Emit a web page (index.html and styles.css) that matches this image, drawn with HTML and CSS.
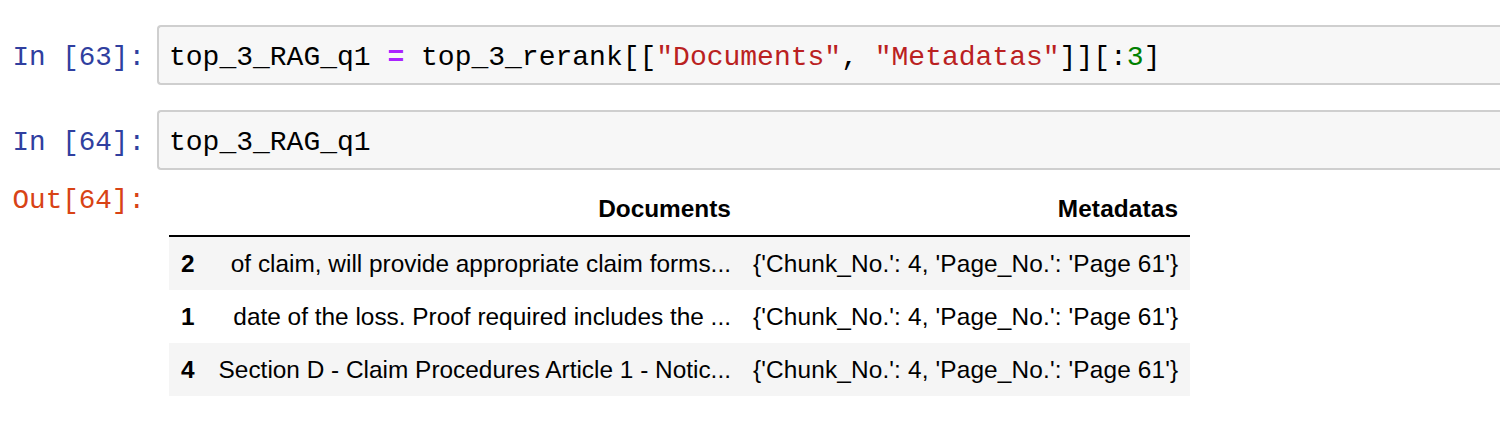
FILE: index.html
```html
<!DOCTYPE html>
<html>
<head>
<meta charset="utf-8">
<link rel="stylesheet" href="styles.css">
</head>
<body>
<div class="notebook">
  <div class="cell">
    <div class="prompt in">In&nbsp;[63]:</div>
    <div class="input-area"><span>top_3_RAG_q1 </span><span class="op">=</span><span> top_3_rerank[[</span><span class="str">"Documents"</span><span>, </span><span class="str">"Metadatas"</span><span>]][:</span><span class="num">3</span><span>]</span></div>
  </div>
  <div class="cell">
    <div class="prompt in">In&nbsp;[64]:</div>
    <div class="input-area"><span>top_3_RAG_q1</span></div>
  </div>
  <div class="output">
    <div class="prompt out">Out[64]:</div>
    <div class="output-area">
      <table class="dataframe">
        <thead>
          <tr><th></th><th>Documents</th><th class="meta">Metadatas</th></tr>
        </thead>
        <tbody>
          <tr><th>2</th><td>of claim, will provide appropriate claim forms...</td><td class="meta">{'Chunk_No.': 4, 'Page_No.': 'Page 61'}</td></tr>
          <tr><th>1</th><td>date of the loss. Proof required includes the ...</td><td class="meta">{'Chunk_No.': 4, 'Page_No.': 'Page 61'}</td></tr>
          <tr><th>4</th><td>Section D - Claim Procedures Article 1 - Notic...</td><td class="meta">{'Chunk_No.': 4, 'Page_No.': 'Page 61'}</td></tr>
        </tbody>
      </table>
    </div>
  </div>
</div>
</body>
</html>
```
FILE: styles.css
```css
html, body {
  margin: 0;
  padding: 0;
  background: #ffffff;
  overflow: hidden;
}
.notebook {
  padding-top: 25px;
  display: flex;
  flex-direction: column;
}
.cell {
  display: flex;
  align-items: flex-start;
  margin-bottom: 25px;
}
.cell:nth-child(2) {
  margin-bottom: 14px;
}
.prompt {
  flex: 0 0 157px;
  box-sizing: border-box;
  padding-right: 12px;
  text-align: right;
  font-family: "Liberation Mono", monospace;
  font-size: 27.6px;
  line-height: 34px;
  padding-top: 16px;
  white-space: nowrap;
}
.prompt.in { color: #303f9f; }
.prompt.out { color: #d84315; padding-top: 0; }
.input-area {
  flex: 1;
  box-sizing: border-box;
  height: 60px;
  border: 2px solid #cfcfcf;
  border-right: none;
  border-radius: 4px 0 0 4px;
  background: #f7f7f7;
  padding: 14px 0 8px 10px;
  font-family: "Liberation Mono", monospace;
  font-size: 28px;
  line-height: 34px;
  color: #000;
  white-space: pre;
}
.op { color: #aa22ff; font-weight: bold; }
.str { color: #ba2121; }
.num { color: #008000; }
.output {
  display: flex;
  align-items: flex-start;
}
.output-area {
  padding-left: 12px;
}
.dataframe {
  border-collapse: collapse;
  font-family: "Liberation Sans", Arial, sans-serif;
  font-size: 24.4px;
  line-height: 29px;
  color: #000;
}
.dataframe th, .dataframe td {
  padding: 12px 12px;
  text-align: right;
  white-space: nowrap;
  vertical-align: middle;
}
.dataframe .meta {
  padding-left: 10px;
  letter-spacing: 0.14px;
}
.dataframe thead th {
  padding-top: 10px;
  padding-bottom: 12px;
  font-weight: bold;
  border-bottom: 2px solid #000;
}
.dataframe tbody th {
  font-weight: bold;
}
.dataframe tbody tr:nth-child(odd) {
  background: #f5f5f5;
}
```
